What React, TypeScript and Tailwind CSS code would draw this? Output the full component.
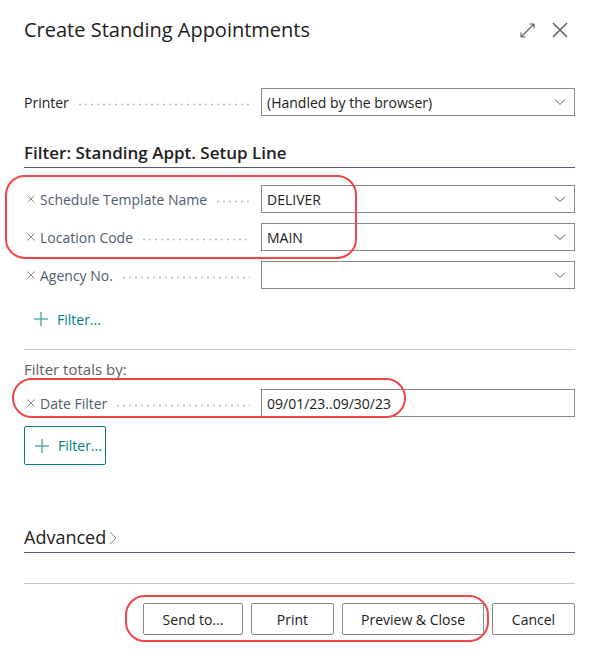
import React from "react";

const FONT = "font-['Segoe_UI','Open_Sans',sans-serif]";

function Chevron() {
  return (
    <svg width="12" height="8" viewBox="0 0 12 8" className="shrink-0">
      <path d="M1 1.5 L6 6.5 L11 1.5" fill="none" stroke="#505c6d" strokeWidth="1" />
    </svg>
  );
}

function Dots() {
  return (
    <div className="flex-1 h-[3px] mx-2 mt-[5px] bg-[radial-gradient(circle,#bdbbb8_0.9px,transparent_1.2px)] bg-[length:6px_3px] bg-repeat-x" />
  );
}

function FieldRow({
  label,
  value,
  removable = true,
  dropdown = true,
}: {
  label: string;
  value: string;
  removable?: boolean;
  dropdown?: boolean;
}) {
  return (
    <div className="flex items-center h-7">
      <div className="w-[237px] flex items-center pr-[3px]">
        {removable && (
          <svg width="16" height="10" viewBox="0 0 16 10" className="shrink-0">
            <path d="M3.5 1.5 L10.5 8.5 M10.5 1.5 L3.5 8.5" stroke="#8a8886" strokeWidth="1" fill="none" />
          </svg>
        )}
        <span className={removable ? "text-[14px] text-[#505c6d]" : "text-[14px] text-[#212121]"}>{label}</span>
        <Dots />
      </div>
      <div className="w-[314px] h-7 border border-[#8a8886] flex items-center justify-between pl-[5px] pr-[8px]">
        <span className="text-[14px] text-[#212121]">{value}</span>
        {dropdown && <Chevron />}
      </div>
    </div>
  );
}

function PlusIcon({ color }: { color: string }) {
  return (
    <svg width="16" height="16" viewBox="0 0 16 16">
      <path d="M8 1 V15 M1 8 H15" stroke={color} strokeWidth="1.5" fill="none" />
    </svg>
  );
}

export default function App() {
  return (
    <div className={`relative w-[599px] h-[658px] bg-white pt-4 ${FONT}`}>
      <div className="px-6">
        {/* header */}
        <div className="flex items-center justify-between h-7">
          <h1 className="text-[20px] leading-7 text-[#212121]">Create Standing Appointments</h1>
          <div className="flex items-center gap-[17px] pr-[7px]">
            <svg width="15" height="15" viewBox="0 0 15 15">
              <path
                d="M1 14 L14 1 M1 14 V9.5 M1 14 H5.5 M14 1 H9.5 M14 1 V5.5"
                stroke="#605e5c"
                strokeWidth="1.1"
                fill="none"
              />
            </svg>
            <svg width="16" height="16" viewBox="0 0 16 16">
              <path d="M1 1 L15 15 M15 1 L1 15" stroke="#605e5c" strokeWidth="1.5" fill="none" />
            </svg>
          </div>
        </div>

        {/* printer */}
        <div className="mt-[44px]">
          <FieldRow label="Printer" value="(Handled by the browser)" removable={false} />
        </div>

        {/* filter section */}
        <div className="mt-[25px] border-b border-[#505c6d] pb-[2px]">
          <h2 className="text-[17px] leading-[24px] font-semibold text-[#212121]">
            Filter: Standing Appt. Setup Line
          </h2>
        </div>
        <div className="mt-[17px] flex flex-col gap-[10px]">
          <FieldRow label="Schedule Template Name" value="DELIVER" />
          <FieldRow label="Location Code" value="MAIN" />
          <FieldRow label="Agency No." value="" />
        </div>
        <div className="mt-4 h-7 flex items-center gap-[8px] pl-[9px]">
          <PlusIcon color="#5ab1ae" />
          <span className="text-[14px] text-[#00807f]">Filter...</span>
        </div>

        <div className="mt-[16px] border-t border-[#c8c6c4]" />
        <div className="mt-[9px] text-[15px] leading-5 text-[#605e5c]">Filter totals by:</div>
        <div className="mt-[10px]">
          <FieldRow label="Date Filter" value="09/01/23..09/30/23" dropdown={false} />
        </div>
        <div className="mt-[9px] w-[82px] h-[39px] border border-[#00807f] rounded-[2px] flex items-center gap-[8px] pl-[9px]">
          <PlusIcon color="#5ab1ae" />
          <span className="text-[14px] text-[#00807f]">Filter...</span>
        </div>

        {/* advanced */}
        <div className="mt-[59px] border-b border-[#505c6d] pb-[2px] flex items-center">
          <span className="text-[18px] leading-[26px] text-[#212121]">Advanced</span>
          <svg width="10" height="14" viewBox="0 0 10 14" className="ml-[2px] mt-[2px]">
            <path d="M2 1 L8 7 L2 13" stroke="#8a8886" strokeWidth="1" fill="none" />
          </svg>
        </div>

        <div className="mt-[30px] border-t border-[#c8c6c4]" />

        {/* buttons */}
        <div className="mt-[19px] flex justify-end gap-2">
          {[
            ["Send to...", "w-[100px]"],
            ["Print", "w-[83px]"],
            ["Preview & Close", "w-[142px]"],
            ["Cancel", "w-[83px]"],
          ].map(([t, w]) => (
            <button
              key={t}
              className={`${w} h-[32px] border border-[#8a8886] rounded-[2px] bg-white text-[14px] text-[#212121]`}
            >
              {t}
            </button>
          ))}
        </div>
      </div>

      {/* red annotation marks */}
      <div className="absolute left-[5px] top-[175px] w-[352px] h-[84px] border-2 border-[#f04646] rounded-[20px] pointer-events-none" />
      <div className="absolute left-[12px] top-[378px] w-[394px] h-[40px] border-2 border-[#f04646] rounded-[20px] pointer-events-none" />
      <div className="absolute left-[125px] top-[595px] w-[364px] h-[47px] border-2 border-[#f04646] rounded-[20px] pointer-events-none" />
    </div>
  );
}
